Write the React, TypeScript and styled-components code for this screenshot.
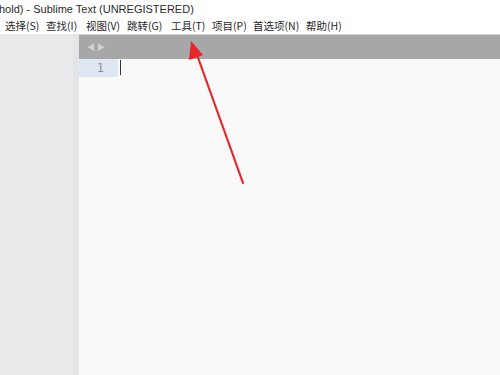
import styled, { createGlobalStyle } from 'styled-components';

const GlobalStyle = createGlobalStyle`
  html, body {
    margin: 0;
    padding: 0;
    background: #ffffff;
  }
  body {
    font-family: "Noto Sans CJK SC", "Liberation Sans", sans-serif;
    overflow: hidden;
  }
`;

const Window = styled.div`
  position: relative;
  width: 500px;
  height: 375px;
  display: flex;
  flex-direction: column;
  overflow: hidden;
  background: #ffffff;
`;

const TitleBar = styled.div`
  height: 17px;
  display: flex;
  align-items: center;
  font-family: "Liberation Sans", "Noto Sans CJK SC", sans-serif;
  font-size: 11px;
  color: #2b2b2b;
  white-space: nowrap;
  margin-left: -1px;
`;

const MenuBar = styled.div`
  position: relative;
  height: 17px;
  font-size: 10.5px;
  color: #1f1f1f;
  white-space: nowrap;
  display: flex;
  align-items: center;
`;

const MenuItem = styled.span<{ $x: number }>`
  position: absolute;
  left: ${p => p.$x}px;
`;

const Body = styled.div`
  flex: 1;
  display: flex;
`;

const Sidebar = styled.div`
  width: 79px;
  background: linear-gradient(to right, #e9eaec 0, #e9eaec 73px, #e4e5e8 73px, #e4e5e8 79px);
`;

const Editor = styled.div`
  flex: 1;
  display: flex;
  flex-direction: column;
  background: #f9f9f9;
`;

const TabBar = styled.div`
  height: 24px;
  border-top: 1px solid #d6d6d6;
  background: #a7a7a7;
  display: flex;
  align-items: center;
  padding-left: 8px;
  gap: 2px;
`;

const NavArrow = styled.span`
  color: #d2d2d2;
  font-size: 8px;
  line-height: 1;
`;

const Line = styled.div`
  display: flex;
  height: 18px;
`;

const Gutter = styled.div`
  width: 39px;
  background: #dfe8f2;
  color: #8a8f96;
  font-family: "DejaVu Sans Mono", monospace;
  font-size: 12px;
  display: flex;
  align-items: center;
  justify-content: flex-end;
  padding-right: 14px;
  box-sizing: border-box;
`;

const Caret = styled.div`
  width: 1px;
  height: 15px;
  margin: 1px 0 0 2px;
  background: #333;
`;

const ArrowOverlay = styled.svg`
  position: absolute;
  left: 0;
  top: 0;
  pointer-events: none;
`;

const menus: [string, number][] = [
  ['选择(S)', 5],
  ['查找(I)', 46],
  ['视图(V)', 86],
  ['跳转(G)', 127],
  ['工具(T)', 171],
  ['项目(P)', 212],
  ['首选项(N)', 253],
  ['帮助(H)', 306],
];

export default function App() {
  return (
    <>
      <GlobalStyle />
      <Window>
        <TitleBar>hold) - Sublime Text (UNREGISTERED)</TitleBar>
        <MenuBar>
          {menus.map(([label, x]) => (
            <MenuItem key={label} $x={x}>{label}</MenuItem>
          ))}
        </MenuBar>
        <Body>
          <Sidebar />
          <Editor>
            <TabBar>
              <NavArrow>◀</NavArrow>
              <NavArrow>▶</NavArrow>
            </TabBar>
            <Line>
              <Gutter>1</Gutter>
              <Caret />
            </Line>
          </Editor>
        </Body>
        <ArrowOverlay width="500" height="375" viewBox="0 0 500 375">
          <line x1="243" y1="183" x2="196" y2="52" stroke="#e8262b" strokeWidth="2.2" strokeLinecap="round" />
          <polygon points="191,41 189,60 203,55" fill="#e8262b" />
        </ArrowOverlay>
      </Window>
    </>
  );
}
